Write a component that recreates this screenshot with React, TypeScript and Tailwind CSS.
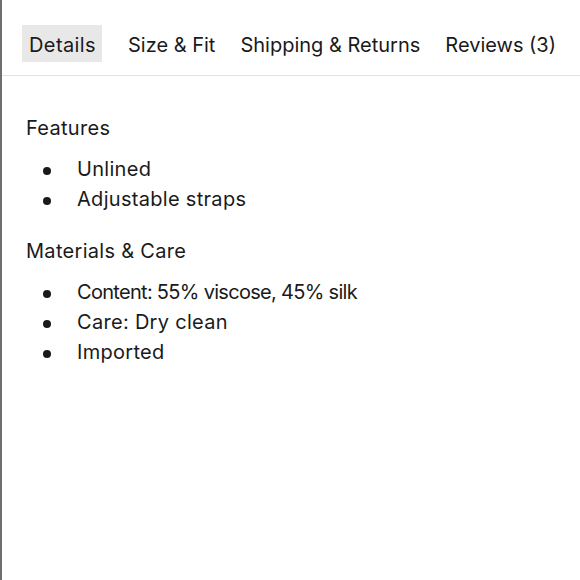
import React from 'react';

const tabs = [
  { label: 'Details', w: 'w-[80px]' },
  { label: 'Size & Fit', w: '' },
  { label: 'Shipping & Returns', w: '' },
  { label: 'Reviews (3)', w: '' },
];

const sections = [
  { title: 'Features', items: ['Unlined', 'Adjustable straps'] },
  { title: 'Materials & Care', items: ['Content: 55% viscose, 45% silk', 'Care: Dry clean', 'Imported'] },
];

const App: React.FC = () => {
  return (
    <div
      className="w-[580px] h-[580px] bg-white border-l-2 border-[#6e6e6e] text-[#1a1a1a] overflow-hidden"
      style={{ fontFamily: 'Inter, "Noto Sans", sans-serif' }}
    >
      {/* tab strip */}
      <div className="flex gap-[11px] pl-[20px] pt-[25px] pb-[13px] border-b border-[#e2e2e2]">
        {tabs.map((t, i) => (
          <div
            key={t.label}
            className={`h-[37px] px-[7px] pt-[2px] flex items-center text-[20px] ${t.w} ${i === 0 ? 'bg-[#e8e8e8] tracking-[0.4px] mr-[8px]' : ''}`}
          >
            {t.label}
          </div>
        ))}
      </div>

      {/* details content */}
      <div className="pl-[24px] pt-[37px] text-[20px] tracking-[0.3px]">
        {sections.map((s) => (
          <div key={s.title} className="mb-[22px]">
            <div className="leading-[30px] mb-[11px]">{s.title}</div>
            <ul>
              {s.items.map((it) => (
                <li
                  key={it}
                  className={`flex items-center leading-[30px] ${it.includes('%') ? 'tracking-[-0.7px]' : ''}`}
                >
                  <span className="w-[8px] h-[8px] rounded-full bg-[#1a1a1a] ml-[17px] mr-[26px] mt-[4px]" />
                  {it}
                </li>
              ))}
            </ul>
          </div>
        ))}
      </div>
    </div>
  );
};

export default App;
